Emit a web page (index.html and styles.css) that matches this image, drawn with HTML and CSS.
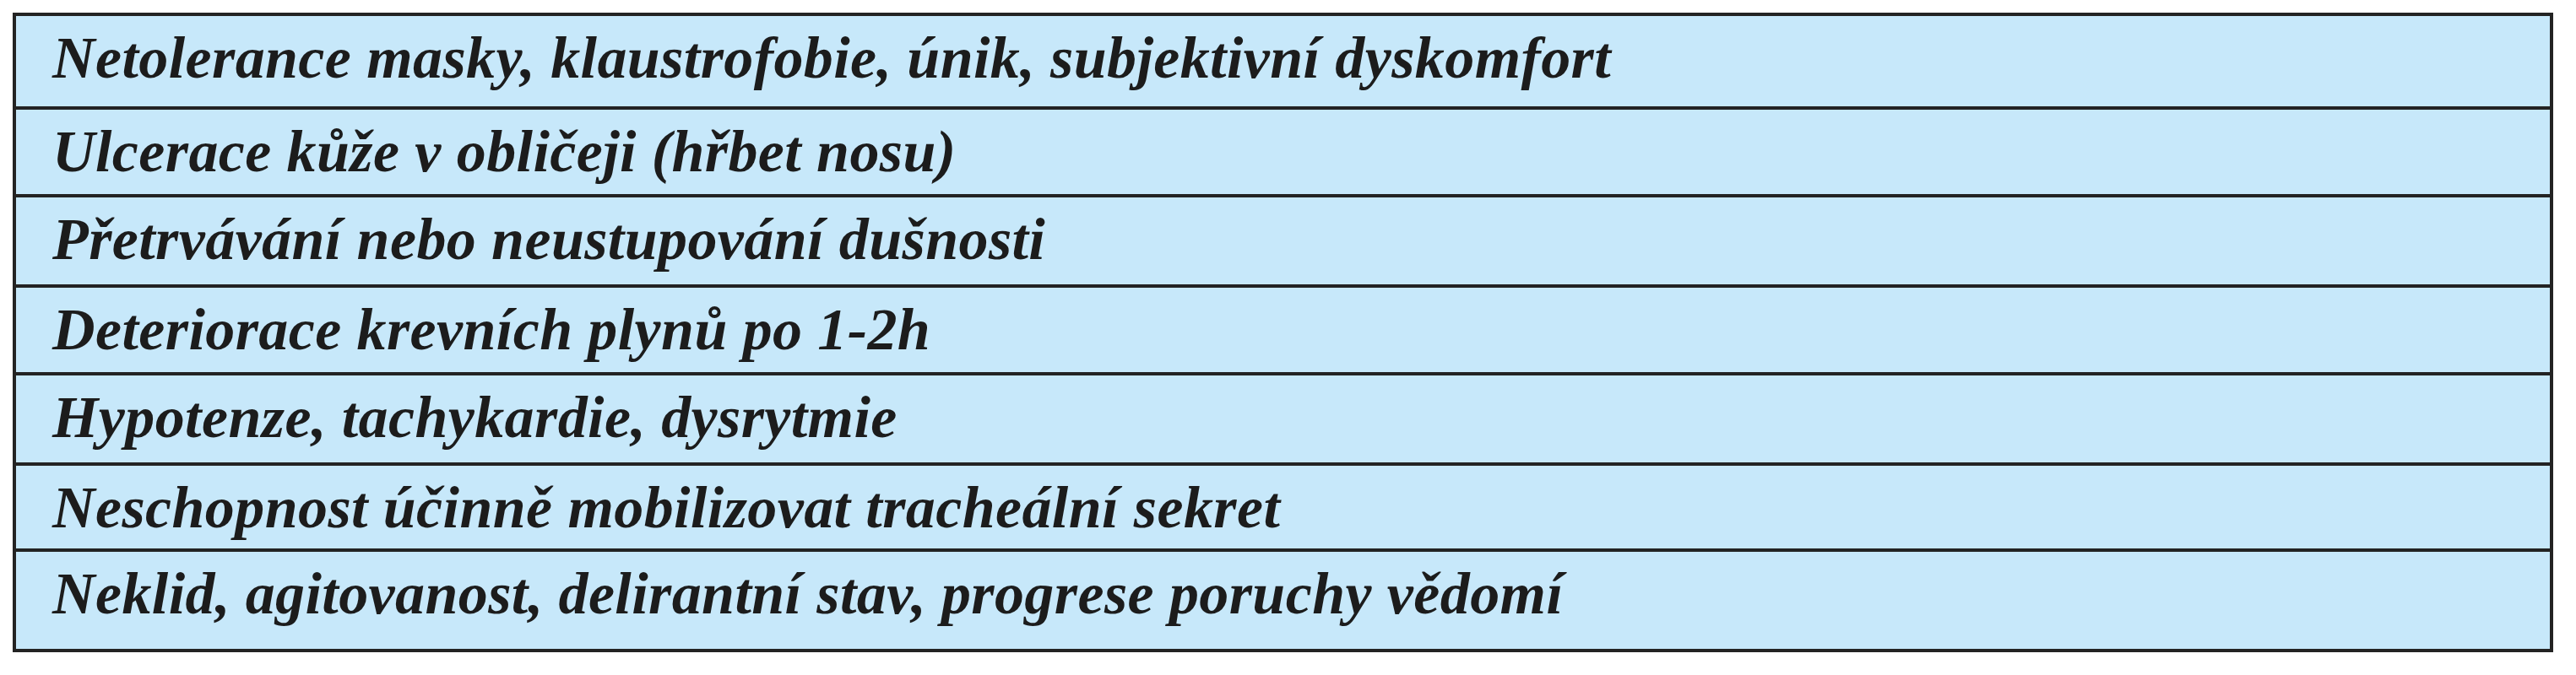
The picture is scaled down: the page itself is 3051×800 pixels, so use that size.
FILE: index.html
```html
<!DOCTYPE html>
<html lang="cs">
<head>
<meta charset="utf-8">
<title>Tabulka</title>
<link rel="stylesheet" href="styles.css">
</head>
<body>
<div class="table">
  <div class="row">Netolerance masky, klaustrofobie, únik, subjektivní dyskomfort</div>
  <div class="row">Ulcerace kůže v obličeji (hřbet nosu)</div>
  <div class="row">Přetrvávání nebo neustupování dušnosti</div>
  <div class="row">Deteriorace krevních plynů po 1-2h</div>
  <div class="row">Hypotenze, tachykardie, dysrytmie</div>
  <div class="row">Neschopnost účinně mobilizovat tracheální sekret</div>
  <div class="row">Neklid, agitovanost, delirantní stav, progrese poruchy vědomí</div>
</div>
</body>
</html>
```
FILE: styles.css
```css
html, body {
  margin: 0;
  padding: 0;
  background: #ffffff;
}
body {
  padding: 15px 27px 0 15px;
}
.table {
  display: grid;
  grid-template-rows: 111px 104px 107px 104px 107px 102px 115px;
  border: 4px solid #232323;
  background: #c7e8fa;
  width: 3001px;
}
.row {
  border-bottom: 4px solid #232323;
  padding: 15px 0 0 43px;
  font-family: "Liberation Serif", "Times New Roman", serif;
  font-style: italic;
  font-weight: bold;
  font-size: 70px;
  letter-spacing: 0.4px;
  line-height: 1;
  color: #1c1c1c;
  white-space: nowrap;
}
.row:last-child {
  border-bottom: 0;
}
```
